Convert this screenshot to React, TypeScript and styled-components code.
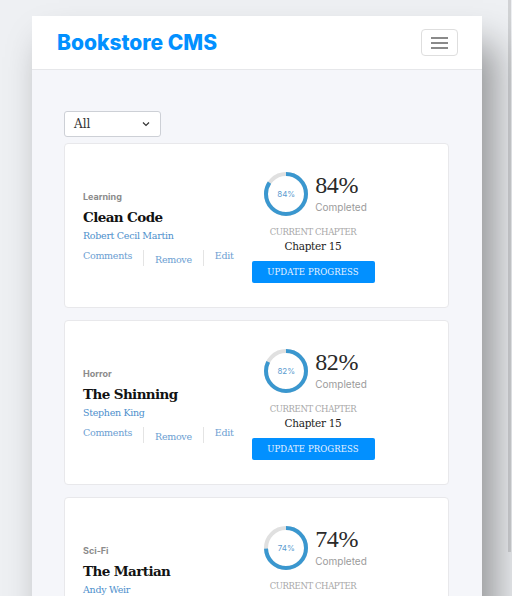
import React from "react";
import styled, { createGlobalStyle } from "styled-components";

const GlobalStyle = createGlobalStyle`
  html, body {
    margin: 0;
    padding: 0;
    height: 596px;
    overflow: hidden;
    background: #eef0f3;
  }
  * {
    box-sizing: border-box;
  }
`;

const slab = `"DejaVu Serif", "Liberation Serif", serif`;
const sans = `Inter, "Open Sans", "Liberation Sans", sans-serif`;

const Page = styled.div`
  padding: 16px 30px 0 32px;
`;

const Panel = styled.div`
  width: 450px;
  height: 700px;
  background: #f5f6fa;
  box-shadow: 14px 28px 36px rgba(0, 0, 0, 0.38);
`;

const Header = styled.header`
  height: 54px;
  background: #fff;
  border-bottom: 1px solid #e6e7ea;
  display: flex;
  align-items: center;
  justify-content: space-between;
  padding: 0 24px 0 25px;
`;

const Logo = styled.h1`
  margin: 0;
  font-family: ${sans};
  font-weight: 800;
  font-size: 21px;
  letter-spacing: 0;
  color: #0290ff;
`;

const MenuButton = styled.button`
  width: 37px;
  height: 27px;
  background: #fff;
  border: 1px solid #dedede;
  border-radius: 4px;
  display: flex;
  flex-direction: column;
  align-items: center;
  justify-content: center;
  gap: 3px;
  padding: 0;
`;

const MenuLine = styled.span`
  width: 17px;
  height: 2px;
  background: #8a8a8a;
`;

const Content = styled.main`
  padding: 41px 33px 0 32px;
  display: flex;
  flex-direction: column;
  gap: 12px;
`;

const Filter = styled.div`
  width: 97px;
  height: 26px;
  margin-bottom: -6px;
  background: #fff;
  border: 1px solid #cdd0d6;
  border-radius: 3px;
  display: flex;
  align-items: center;
  justify-content: space-between;
  padding: 0 9px 0 9px;
  font-family: ${slab};
  font-size: 12px;
  color: #333;
`;

const Card = styled.article`
  height: 165px;
  background: #fff;
  border: 1px solid #e8e8eb;
  border-radius: 4px;
  display: flex;
  align-items: center;
  padding: 0 0 0 18px;
`;

const Info = styled.div`
  width: 168px;
  display: flex;
  flex-direction: column;
  margin-top: 6px;
`;

const Genre = styled.span`
  font-family: ${sans};
  font-weight: 700;
  font-size: 9px;
  color: #8b8b8b;
`;

const Title = styled.h2`
  margin: 7px 0 0;
  font-family: ${slab};
  font-weight: 700;
  font-size: 13.5px;
  letter-spacing: -0.6px;
  color: #121212;
`;

const Author = styled.span`
  margin-top: 5px;
  font-family: ${slab};
  font-weight: 300;
  font-size: 9.5px;
  letter-spacing: -0.3px;
  color: #4d8fcc;
`;

const Action = styled.span<{ $offset?: boolean; $divider?: boolean }>`
  font-family: ${slab};
  font-size: 9.5px;
  letter-spacing: -0.3px;
  color: #6b9ed2;
  padding: ${(p) => (p.$offset ? "4px" : "0")} 11px 0;
  height: 16px;
  border-right: ${(p) => (p.$divider ? "1px solid #e4e4e4" : "none")};
  &:first-child {
    padding-left: 0;
  }
`;

const Actions = styled.div`
  margin-top: 9px;
  display: flex;
  align-items: flex-start;
`;

const ProgressCol = styled.div`
  width: 124px;
  display: flex;
  flex-direction: column;
  align-items: center;
  margin-top: 2px;
`;

const ProgressRow = styled.div`
  display: flex;
  align-items: flex-start;
  gap: 6px;
  margin-left: 4px;
`;

const Ring = styled.div`
  position: relative;
  width: 46px;
  height: 46px;
`;

const RingLabel = styled.span`
  position: absolute;
  inset: 0;
  display: flex;
  align-items: center;
  justify-content: center;
  font-family: ${sans};
  font-size: 8px;
  color: #5b9bd0;
`;

const Stats = styled.div`
  display: flex;
  flex-direction: column;
`;

const Percent = styled.span`
  font-family: "Liberation Serif", serif;
  font-weight: 400;
  font-size: 24px;
  line-height: 28px;
  letter-spacing: -0.4px;
  color: #2a2a2a;
`;

const Completed = styled.span`
  margin-top: 2px;
  font-family: ${sans};
  font-size: 10px;
  color: #9b9b9b;
`;

const ChapterLabel = styled.span`
  margin-top: 10px;
  font-family: ${slab};
  font-weight: 300;
  font-size: 8.5px;
  letter-spacing: -0.4px;
  color: #a8a8a8;
`;

const Chapter = styled.span`
  margin-top: 3px;
  font-family: ${slab};
  font-size: 10.5px;
  letter-spacing: -0.3px;
  color: #222;
`;

const UpdateButton = styled.button`
  margin-top: 9px;
  width: 123px;
  height: 22px;
  border: none;
  border-radius: 2px;
  background: #0290ff;
  color: #e8f3ff;
  font-family: ${slab};
  font-weight: 300;
  font-size: 8.5px;
  letter-spacing: 0.1px;
  padding: 0;
`;

const ScrollThumb = styled.div`
  position: fixed;
  top: 0;
  right: 1px;
  width: 3px;
  height: 552px;
  background: rgba(0, 0, 0, 0.12);
`;

const books = [
  { genre: "Learning", title: "Clean Code", author: "Robert Cecil Martin", progress: 84 },
  { genre: "Horror", title: "The Shinning", author: "Stephen King", progress: 82 },
  { genre: "Sci-Fi", title: "The Martian", author: "Andy Weir", progress: 74 },
];

const ProgressRing = ({ value }: { value: number }) => {
  const r = 20;
  const c = 2 * Math.PI * r;
  return (
    <Ring>
      <svg width="46" height="46" viewBox="0 0 46 46">
        <circle cx="23" cy="23" r={r} fill="none" stroke="#e0e0e0" strokeWidth="4" />
        <circle
          cx="23"
          cy="23"
          r={r}
          fill="none"
          stroke="#3a97cf"
          strokeWidth="4"
          strokeDasharray={`${(c * value) / 100} ${c}`}
          transform="rotate(-90 23 23)"
        />
      </svg>
      <RingLabel>{value}%</RingLabel>
    </Ring>
  );
};

const App = () => {
  return (
    <>
      <GlobalStyle />
      <Page>
        <Panel>
          <Header>
            <Logo>Bookstore CMS</Logo>
            <MenuButton>
              <MenuLine />
              <MenuLine />
              <MenuLine />
            </MenuButton>
          </Header>
          <Content>
            <Filter>
              All
              <svg width="10" height="10" viewBox="0 0 10 10">
                <path d="M2 3.5 L5 6.5 L8 3.5" fill="none" stroke="#333" strokeWidth="1.2" />
              </svg>
            </Filter>
            {books.map((book) => (
              <Card key={book.title}>
                <Info>
                  <Genre>{book.genre}</Genre>
                  <Title>{book.title}</Title>
                  <Author>{book.author}</Author>
                  <Actions>
                    <Action $divider>Comments</Action>
                    <Action $divider $offset>
                      Remove
                    </Action>
                    <Action>Edit</Action>
                  </Actions>
                </Info>
                <ProgressCol>
                  <ProgressRow>
                    <ProgressRing value={book.progress} />
                    <Stats>
                      <Percent>{book.progress}%</Percent>
                      <Completed>Completed</Completed>
                    </Stats>
                  </ProgressRow>
                  <ChapterLabel>CURRENT CHAPTER</ChapterLabel>
                  <Chapter>Chapter 15</Chapter>
                  <UpdateButton>UPDATE PROGRESS</UpdateButton>
                </ProgressCol>
              </Card>
            ))}
          </Content>
        </Panel>
      </Page>
      <ScrollThumb />
    </>
  );
};

export default App;
